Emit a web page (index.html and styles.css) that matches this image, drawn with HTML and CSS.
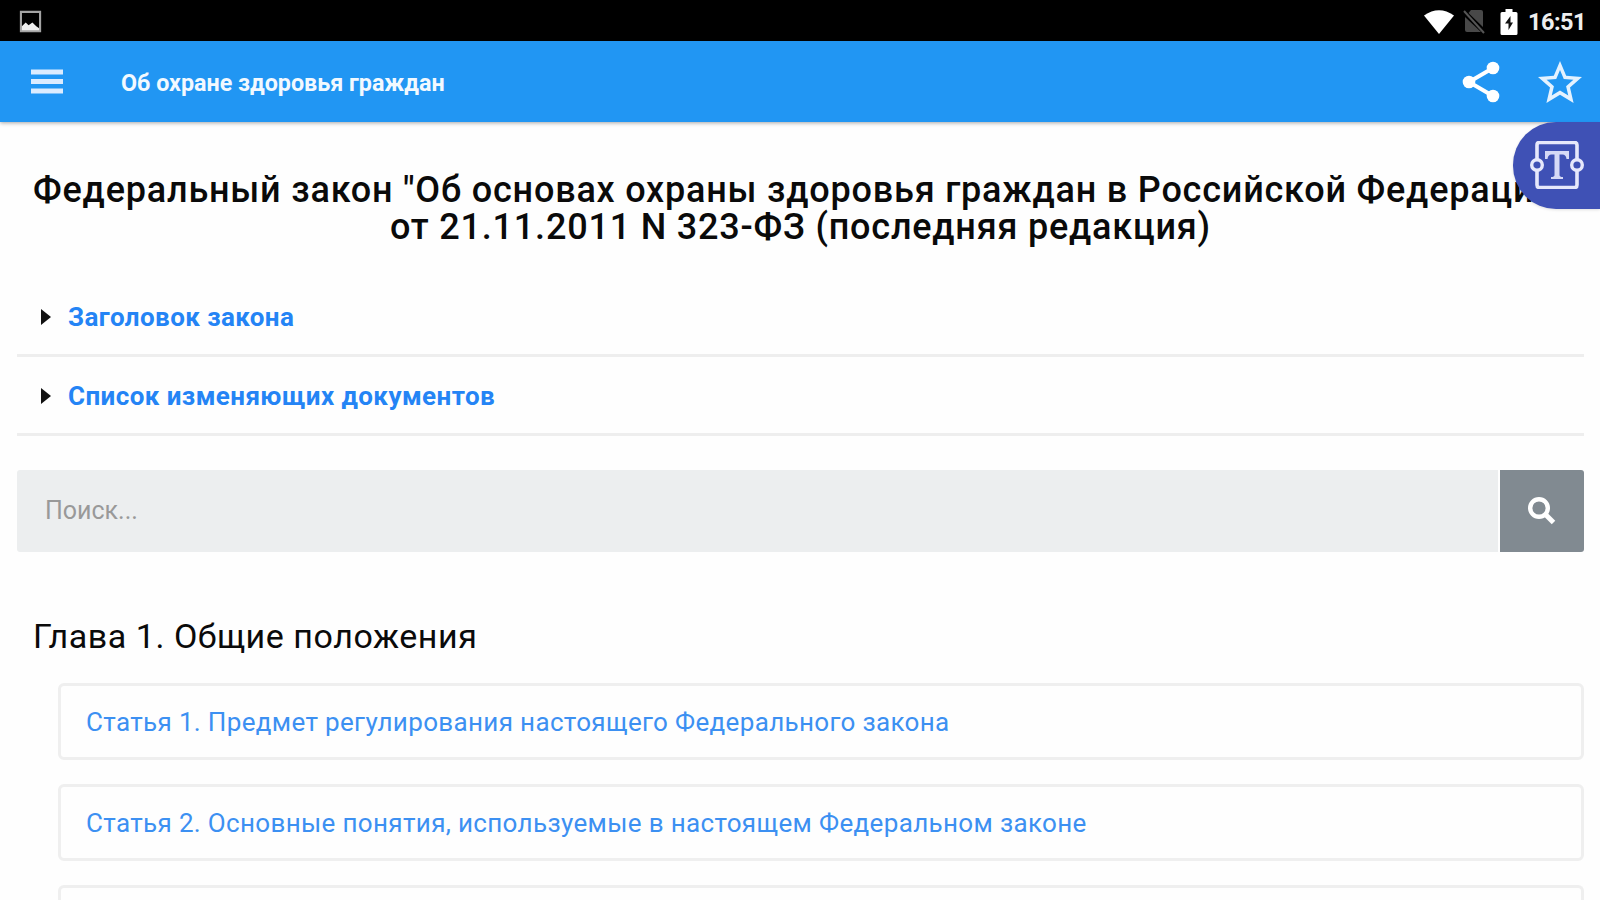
FILE: index.html
```html
<!DOCTYPE html>
<html lang="ru">
<head>
<meta charset="utf-8">
<title>Об охране здоровья граждан</title>
<link rel="stylesheet" href="styles.css">
</head>
<body>
<div class="statusbar">
  <svg class="status-picture" viewBox="0 0 24 24"><path d="M2 2h20v20H2z" fill="none" stroke="#a4a4a4" stroke-width="2.2"/><path d="M3 21v-4l4-4 3 3 4-3 4 4 3 2v2z" fill="#eee"/></svg>
  <div class="status-right">
    <svg class="wifi" viewBox="0 0 30 24"><path d="M15 24 0 5.500Q15-5 30 5.500z" fill="#fff"/></svg>
    <svg class="nosim" viewBox="0 0 22 25"><path d="M8 1h10q2 0 2 2v15L5.500 4zM2 8l16 15H4q-2 0-2-2z" fill="#484848"/><path d="M1 2l20 22" stroke="#555" stroke-width="2"/></svg>
    <svg class="battery" viewBox="0 0 18 26"><path d="M5.500 0h7v3H16q1.500 0 1.500 1.500v20Q17.500 26 16 26H2Q.5 26 .5 24.500v-20Q.5 3 2 3h3.500z" fill="#fff"/><path d="M10.500 7 5 14.500h3.500V21L13 13.500H10.500z" fill="#111"/></svg>
    <span class="clock">16:51</span>
  </div>
</div>
<header class="appbar">
  <svg class="menu" viewBox="0 0 32 26"><path d="M0 3h32M0 12.500h32M0 22h32" stroke="#dcecff" stroke-width="5.200"/></svg>
  <div class="app-title">Об охране здоровья граждан</div>
  <svg class="share" viewBox="0 0 38 42"><path d="M31 7 7 21l24 14" fill="none" stroke="#fff" stroke-width="4"/><circle cx="31" cy="7" r="6.300" fill="#fff"/><circle cx="7" cy="21" r="6.300" fill="#fff"/><circle cx="31" cy="35" r="6.300" fill="#fff"/></svg>
  <svg class="star" viewBox="2 2 20 19"><path d="M22 9.240l-7.190-.620L12 2 9.190 8.630 2 9.240l5.460 4.730L5.820 21 12 17.270 18.180 21l-1.630-7.030L22 9.240zM12 15.400l-3.760 2.270 1-4.280-3.320-2.880 4.380-.380L12 6.100l1.710 4.040 4.380.380-3.320 2.880 1 4.280L12 15.400z" fill="#e4f2ff"/></svg>
  <div class="text-tool">
    <svg viewBox="0 0 54 48">
      <path d="M7 18V4q0-2.500 2.500-2.500h35Q47 1.500 47 4v14M7 30v14q0 2.500 2.500 2.500h35Q47 46.500 47 44V30" fill="none" stroke="#e6e8fb" stroke-width="3.600"/>
      <circle cx="7" cy="24" r="5.300" fill="none" stroke="#e6e8fb" stroke-width="3.400"/><circle cx="47" cy="24" r="5.300" fill="none" stroke="#e6e8fb" stroke-width="3.400"/>
      <path d="M15 10h24v8h-2.500q-.5-4.500-4-4.500h-3V34q0 2 3.500 2v2H21v-2q3.500 0 3.500-2V13.500h-3q-3.500 0-4 4.500H15z" fill="#d6d9f6"/>
    </svg>
  </div>
</header>
<main class="content">
  <h1 class="law-title">Федеральный закон "Об основах охраны здоровья граждан в Российской Федерации"<br>от 21.11.2011 N 323-ФЗ (последняя редакция)</h1>
  <div class="fold"><i class="marker"></i>Заголовок закона</div>
  <div class="fold"><i class="marker"></i>Список изменяющих документов</div>
  <div class="search">
    <div class="search-field">Поиск...</div>
    <div class="search-button"><svg viewBox="0 0 28 28"><circle cx="11" cy="11" r="8.800" fill="none" stroke="#fff" stroke-width="4.400"/><path d="M17.500 17.500 25.500 25.500" stroke="#fff" stroke-width="5"/></svg></div>
  </div>
  <h2 class="chapter">Глава 1. Общие положения</h2>
  <div class="articles">
    <a class="article">Статья 1. Предмет регулирования настоящего Федерального закона</a>
    <a class="article">Статья 2. Основные понятия, используемые в настоящем Федеральном законе</a>
    <a class="article article-cut"></a>
  </div>
</main>
</body>
</html>
```
FILE: styles.css
```css
* { box-sizing: border-box; }
body {
  margin: 0;
  height: 900px;
  overflow: hidden;
  background: #fefefe;
  color: #0a0a0a;
  font-family: Roboto, sans-serif;
}
svg { display: block; flex: none; }
.statusbar {
  height: 41px;
  background: #000;
  display: flex;
  justify-content: space-between;
  padding: 0 15px 0 19px;
}
.status-picture { width: 23px; height: 23px; margin-top: 10px; }
.status-right { display: flex; align-items: flex-start; }
.wifi { width: 30px; height: 24px; margin: 10px 9px 0 0; }
.nosim { width: 22px; height: 25px; margin: 9px 15px 0 0; }
.battery { width: 18px; height: 26px; margin: 9px 10px 0 0; }
.clock {
  width: 57px;
  color: #eee;
  font-size: 23.500px;
  font-weight: 700;
  line-height: 28px;
  margin-top: 8px;
  letter-spacing: -.5px;
  white-space: nowrap;
}
.appbar {
  position: relative;
  height: 81px;
  background: #2196f3;
  box-shadow: 0 1px 4px rgba(0, 0, 0, .35);
  display: flex;
  align-items: flex-start;
  padding: 0 18px 0 31px;
}
.menu { width: 32px; height: 26px; margin-top: 28px; }
.app-title {
  flex: 1;
  margin: 28px 0 0 58px;
  color: #f2f9ff;
  font-size: 23.300px;
  font-weight: 700;
  line-height: 28px;
}
.share { width: 38px; height: 42px; margin: 20px 38px 0 0; }
.star { width: 44px; height: 42px; margin-top: 20px; }
.text-tool {
  position: absolute;
  right: 0;
  top: 81px;
  width: 87px;
  height: 87px;
  padding: 19px 0 0 17px;
  border-radius: 43px 0 0 43px;
  background: #3f51b5;
  box-shadow: 0 1px 3px rgba(0, 0, 0, .12);
}
.text-tool svg { width: 54px; height: 48px; }
.content { padding: 50px 16px 0 17px; }
.law-title {
  margin: 0 0 32px;
  font-size: 36px;
  font-weight: 500;
  line-height: 37px;
  letter-spacing: .8px;
  text-align: center;
  white-space: nowrap;
}
.fold {
  display: flex;
  align-items: center;
  height: 79px;
  padding: 2px 0 0 24px;
  border-bottom: 3px solid #eee;
  color: #2484f5;
  font-size: 26px;
  font-weight: 700;
  letter-spacing: .420px;
}
.marker {
  margin-right: 17px;
  border-left: 10px solid #111;
  border-top: 8px solid transparent;
  border-bottom: 8px solid transparent;
}
.search { display: flex; height: 82px; margin-top: 34px; }
.search-field {
  flex: 1;
  margin-right: 2px;
  padding-left: 28px;
  border-radius: 3px 0 0 3px;
  background: #eceeef;
  color: #999;
  font-size: 25px;
  line-height: 82px;
}
.search-button {
  width: 84px;
  padding: 27px 0 0 28px;
  border-radius: 0 3px 3px 0;
  background: #818a91;
}
.search-button svg { width: 28px; height: 28px; }
.chapter {
  margin: 62px 0 0 16px;
  font-size: 34px;
  font-weight: 400;
  line-height: 44px;
  letter-spacing: .550px;
}
.articles {
  display: grid;
  gap: 24px;
  margin: 25px 0 0 41px;
}
.article {
  height: 77px;
  padding-left: 25px;
  border: 3px solid #efefef;
  border-radius: 6px;
  color: #3c90f2;
  font-size: 26px;
  line-height: 73px;
  letter-spacing: .340px;
}
.article-cut {
  height: 15px;
  border-bottom: 0;
  border-radius: 6px 6px 0 0;
}
```
